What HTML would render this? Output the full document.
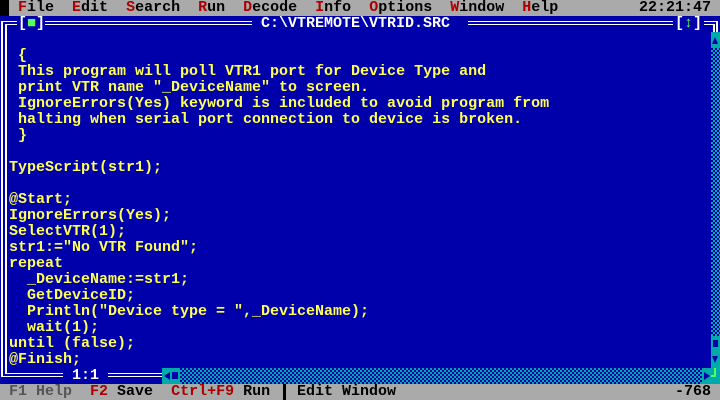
<!DOCTYPE html>
<html><head><meta charset="utf-8"><style>
*{margin:0;padding:0}
body{width:720px;height:400px;background:#0000aa;position:relative;overflow:hidden;font-family:"Liberation Mono",monospace;font-size:15px;font-weight:bold;line-height:16px}
.r{position:absolute;left:0;height:16px;white-space:pre;color:#ffff55}
.a{position:absolute}
.k{color:#000}.d{color:#aa0000}.g{color:#555}.w{color:#fff}
.chk{background:repeating-conic-gradient(#00aaaa 0 25%,#0000aa 0 50%) 0 0/4px 4px}
</style></head><body>
<div class="a" style="left:0;top:0;width:720px;height:16px;background:#aaaaaa"></div>
<div class="a" style="left:0;top:0;width:9px;height:16px;background:#000"></div>
<div class="r k" style="top:0;left:18px"><span class="d">F</span>ile  <span class="d">E</span>dit  <span class="d">S</span>earch  <span class="d">R</span>un  <span class="d">D</span>ecode  <span class="d">I</span>nfo  <span class="d">O</span>ptions  <span class="d">W</span>indow  <span class="d">H</span>elp</div>
<div class="r k" style="top:0;left:639px">22:21:47</div>
<!-- top frame -->
<div class="a" style="left:1px;top:21px;width:16px;height:1px;background:#fff"></div>
<div class="a" style="left:5px;top:24px;width:12px;height:1px;background:#fff"></div>
<div class="a" style="left:1px;top:21px;width:2px;height:356px;background:#fff"></div>
<div class="a" style="left:5px;top:24px;width:2px;height:350px;background:#fff"></div>
<div class="r w" style="top:16px;left:18px">[<span style="color:#55ff55">■</span>]</div>
<div class="a" style="left:45px;top:21px;width:207px;height:1px;background:#fff"></div>
<div class="a" style="left:45px;top:24px;width:207px;height:1px;background:#fff"></div>
<div class="r w" style="top:16px;left:252px"> C:\VTREMOTE\VTRID.SRC </div>
<div class="a" style="left:468px;top:21px;width:205px;height:1px;background:#fff"></div>
<div class="a" style="left:468px;top:24px;width:205px;height:1px;background:#fff"></div>
<div class="r w" style="top:16px;left:675px">[<span style="color:#55ff55">↕</span>]</div>
<div class="a" style="left:704px;top:21px;width:14px;height:1px;background:#fff"></div>
<div class="a" style="left:704px;top:24px;width:11px;height:1px;background:#fff"></div>
<div class="a" style="left:716px;top:21px;width:2px;height:11px;background:#fff"></div>
<div class="a" style="left:713px;top:24px;width:2px;height:8px;background:#fff"></div>
<!-- vertical scrollbar -->
<div class="a" style="left:711px;top:32px;width:9px;height:16px;background:#00aaaa"></div>
<div class="a" style="left:712px;top:37px;width:0;height:0;border-left:3.5px solid transparent;border-right:3.5px solid transparent;border-bottom:7px solid #0000aa"></div>
<div class="a chk" style="left:711px;top:48px;width:9px;height:288px"></div>
<div class="a" style="left:711px;top:336px;width:9px;height:32px;background:#00aaaa"></div>
<div class="a" style="left:713px;top:340px;width:5px;height:7px;background:#0000aa"></div>
<div class="a" style="left:712px;top:356px;width:0;height:0;border-left:3.5px solid transparent;border-right:3.5px solid transparent;border-top:7px solid #0000aa"></div>
<!-- code -->
<div class="r" style="top:48px;left:9px"> {</div>
<div class="r" style="top:64px;left:9px"> This program will poll VTR1 port for Device Type and</div>
<div class="r" style="top:80px;left:9px"> print VTR name "_DeviceName" to screen.</div>
<div class="r" style="top:96px;left:9px"> IgnoreErrors(Yes) keyword is included to avoid program from</div>
<div class="r" style="top:112px;left:9px"> halting when serial port connection to device is broken.</div>
<div class="r" style="top:128px;left:9px"> }</div>
<div class="r" style="top:160px;left:9px">TypeScript(str1);</div>
<div class="r" style="top:192px;left:9px">@Start;</div>
<div class="r" style="top:208px;left:9px">IgnoreErrors(Yes);</div>
<div class="r" style="top:224px;left:9px">SelectVTR(1);</div>
<div class="r" style="top:240px;left:9px">str1:="No VTR Found";</div>
<div class="r" style="top:256px;left:9px">repeat</div>
<div class="r" style="top:272px;left:9px">  _DeviceName:=str1;</div>
<div class="r" style="top:288px;left:9px">  GetDeviceID;</div>
<div class="r" style="top:304px;left:9px">  Println("Device type = ",_DeviceName);</div>
<div class="r" style="top:320px;left:9px">  wait(1);</div>
<div class="r" style="top:336px;left:9px">until (false);</div>
<div class="r" style="top:352px;left:9px">@Finish;</div>
<!-- bottom frame -->
<div class="a" style="left:1px;top:376px;width:62px;height:1px;background:#fff"></div>
<div class="a" style="left:5px;top:373px;width:58px;height:1px;background:#fff"></div>
<div class="r w" style="top:368px;left:63px"> 1:1 </div>
<div class="a" style="left:108px;top:373px;width:54px;height:1px;background:#fff"></div>
<div class="a" style="left:108px;top:376px;width:54px;height:1px;background:#fff"></div>
<div class="a" style="left:162px;top:368px;width:18px;height:16px;background:#00aaaa"></div>
<div class="a" style="left:164px;top:372px;width:0;height:0;border-top:4px solid transparent;border-bottom:4px solid transparent;border-right:6px solid #0000aa"></div>
<div class="a" style="left:172px;top:372px;width:6px;height:7px;background:#0000aa"></div>
<div class="a chk" style="left:180px;top:368px;width:522px;height:16px"></div>
<div class="a" style="left:702px;top:368px;width:9px;height:16px;background:#00aaaa"></div>
<div class="a" style="left:704px;top:372px;width:0;height:0;border-top:4px solid transparent;border-bottom:4px solid transparent;border-left:6px solid #0000aa"></div>
<div class="a" style="left:711px;top:368px;width:9px;height:16px;background:#00aaaa"></div>
<div class="a" style="left:714px;top:368px;width:2px;height:9px;background:#55ff55"></div>
<div class="a" style="left:711px;top:375px;width:5px;height:2px;background:#55ff55"></div>
<!-- status -->
<div class="a" style="left:0;top:384px;width:720px;height:16px;background:#aaaaaa"></div>
<div class="r k" style="top:384px;left:9px"><span class="g">F1 Help</span>  <span class="d">F2</span> Save  <span class="d">Ctrl+F9</span> Run </div>
<div class="a" style="left:283px;top:384px;width:3px;height:16px;background:#000"></div>
<div class="r k" style="top:384px;left:297px">Edit Window</div>
<div class="r k" style="top:384px;left:675px">-768</div>
</body></html>
